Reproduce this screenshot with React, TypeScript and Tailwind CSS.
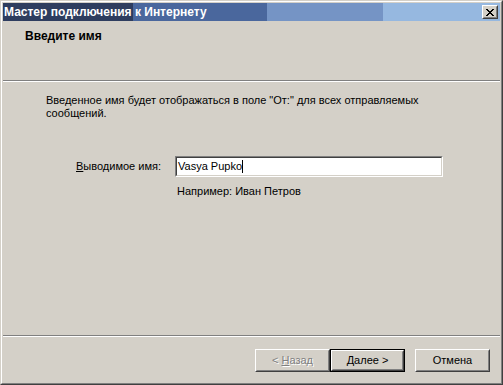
const bevelOut = "border border-t-white border-l-white border-r-[#404040] border-b-[#404040]"
const bevelIn = "border border-t-[#d4d0c8] border-l-[#d4d0c8] border-r-[#808080] border-b-[#808080]"

type BtnProps = { children: React.ReactNode; isDefault?: boolean; disabled?: boolean }

const WinButton = ({ children, isDefault = false, disabled = false }: BtnProps) => {
  const face = (
    <div className={`${bevelOut} h-full`}>
      <div className={`${bevelIn} h-full flex items-center justify-center ${disabled ? "text-[#808080] [text-shadow:1px_1px_0_#fff]" : "text-black"}`}>
        {children}
      </div>
    </div>
  )
  return (
    <button type="button" className={`w-[75px] h-[23px] p-0 bg-[#d4d0c8] ${isDefault ? "border border-black" : ""}`}>
      {face}
    </button>
  )
}

export default function App() {
  return (
    <div className="w-[503px] h-[385px] bg-[#d4d0c8] font-['Liberation_Sans',Arial,sans-serif] text-[11px] leading-[13px] text-black">
      <div className="h-full flex flex-col border border-t-[#d4d0c8] border-l-[#d4d0c8] border-r-[#404040] border-b-[#404040]">
        <div className="flex-1 flex flex-col border border-t-white border-l-white border-r-[#808080] border-b-[#808080] p-px">
          {/* title bar */}
          <div className="h-[18px] flex items-center justify-between bg-[linear-gradient(to_right,#2e3d5f_0_130px,#4a679d_130px_264px,#7594c5_264px_380px,#96b8e0_380px)]">
            <span className="pl-[1px] text-white font-bold text-[12px]">
              Мастер подключения к Интернету
            </span>
            <div className="mr-[2px] w-[16px] h-[14px] bg-[#d4d0c8] border border-t-white border-l-white border-r-[#404040] border-b-[#404040]">
              <div className="h-full flex items-center justify-center border border-t-[#d4d0c8] border-l-[#d4d0c8] border-r-[#808080] border-b-[#808080]">
                <svg width="8" height="7" viewBox="0 0 8 7" shapeRendering="crispEdges">
                  <path d="M0 0h2v1h-2zM6 0h2v1h-2zM1 1h2v1h-2zM5 1h2v1h-2zM2 2h4v1h-4zM3 3h2v1h-2zM2 4h4v1h-4zM1 5h2v1h-2zM5 5h2v1h-2zM0 6h2v1h-2zM6 6h2v1h-2z" fill="#000" />
                </svg>
              </div>
            </div>
          </div>

          {/* header */}
          <div className="h-[59px] pt-[9px] pl-[22px]">
            <span className="font-bold text-[12px]">Введите имя</span>
          </div>
          <div className="h-[2px] border-t border-t-[#808080] border-b border-b-white" />

          {/* content */}
          <div className="flex-1 flex flex-col pt-[12px]">
            <p className="pl-[43px] w-[430px]">
              Введенное имя будет отображаться в поле "От:" для всех отправляемых сообщений.
            </p>
            <div className="mt-[36px] flex items-center pl-[73px]">
              <label className="w-[99px]">
                <span className="underline">В</span>ыводимое имя:
              </label>
              <div className="w-[268px] h-[21px] border border-t-[#808080] border-l-[#808080] border-r-white border-b-white">
                <div className="h-full flex items-center bg-white pl-[1px] border border-t-[#404040] border-l-[#404040] border-r-[#d4d0c8] border-b-[#d4d0c8]">
                  <span>Vasya Pupko</span>
                  <span className="w-px h-[13px] bg-black" />
                </div>
              </div>
            </div>
            <p className="mt-[8px] pl-[174px]">Например: Иван Петров</p>
          </div>

          {/* footer */}
          <div className="h-[47px] flex flex-col">
            <div className="h-[2px] border-t border-t-[#808080] border-b border-b-white" />
            <div className="mt-[12px] flex justify-end pr-[10px]">
              <WinButton disabled>
                &lt; <span className="underline ml-[3px]">Н</span>азад
              </WinButton>
              <WinButton isDefault>
                <span className="underline">Д</span>алее &gt;
              </WinButton>
              <div className="w-[10px]" />
              <WinButton>Отмена</WinButton>
            </div>
          </div>
        </div>
      </div>
    </div>
  )
}
